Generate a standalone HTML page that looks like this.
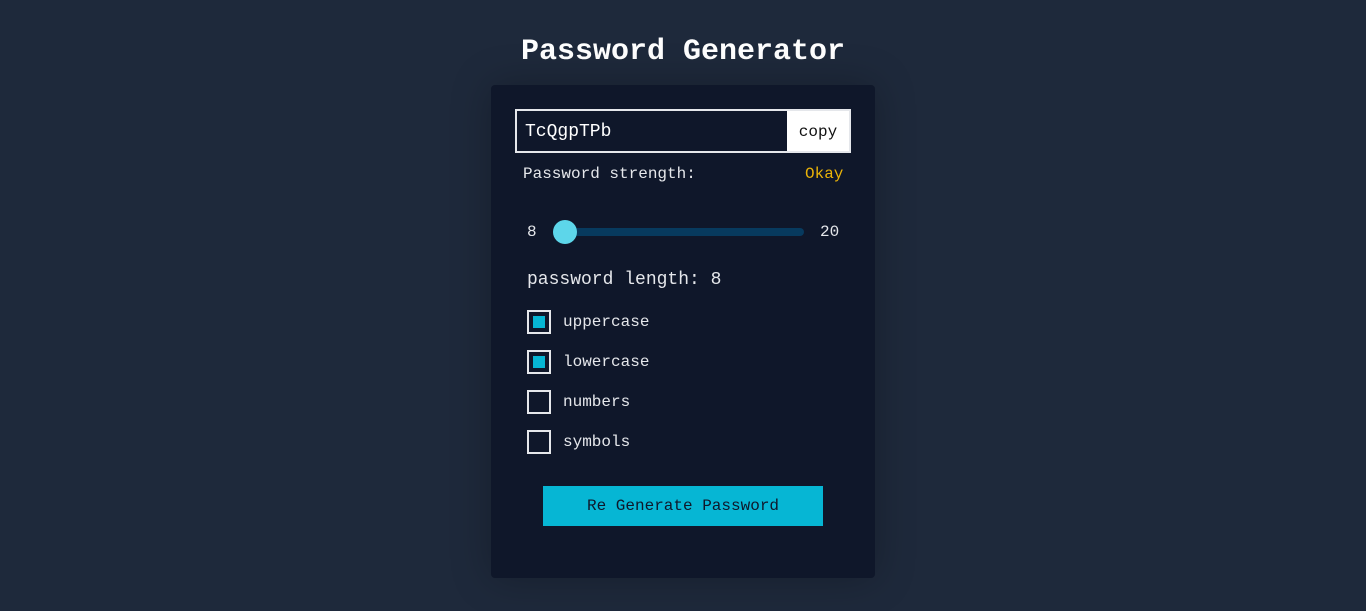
<!DOCTYPE html>
<html><head><style>
body{margin:0;width:1366px;height:611px;background:#1e293b;font-family:"Liberation Mono",monospace;color:#e5e7eb;position:relative;overflow:hidden}
.t{position:absolute;left:0;width:1366px;top:32px;text-align:center;font-size:30px;font-weight:bold;color:#fff;line-height:40px}
.card{position:absolute;left:491px;top:85px;width:384px;height:493px;background:#0f172a;border-radius:4px;box-shadow:0 0 40px rgba(0,0,0,.25)}
.a{position:absolute}
.inp{left:24px;top:24px;width:332px;height:40px;border:2px solid #e5e7eb;background:#0f172a}
.pw{left:8px;top:0;line-height:42px;font-size:18px;color:#fff}
.cp{right:0;top:0;width:62px;height:40px;background:#fff;color:#111;font-size:16px;line-height:42px;text-align:center}
.s{font-size:16px;line-height:20px}
.cb{width:20px;height:20px;border:2px solid #e5e7eb}
.cb i{position:absolute;left:4px;top:4px;width:12px;height:12px;background:#06b6d4}
</style></head><body>
<div class="t">Password Generator</div>
<div class="card">
<div class="a inp"><div class="a pw">TcQgpTPb</div><div class="a cp">copy</div></div>
<div class="a s" style="left:32px;top:79px">Password strength:</div>
<div class="a s" style="left:314px;top:79px;color:#eab308">Okay</div>
<div class="a s" style="left:36px;top:137px">8</div>
<div class="a" style="left:62px;top:143px;width:251px;height:8px;border-radius:4px;background:#073a5e"></div>
<div class="a" style="left:62px;top:135px;width:24px;height:24px;border-radius:50%;background:#5dd6ea"></div>
<div class="a s" style="left:329px;top:137px">20</div>
<div class="a" style="left:36px;top:184px;font-size:18px;line-height:22px">password length: 8</div>
<div class="a cb" style="left:36px;top:225px"><i></i></div><div class="a s" style="left:72px;top:227px">uppercase</div>
<div class="a cb" style="left:36px;top:265px"><i></i></div><div class="a s" style="left:72px;top:267px">lowercase</div>
<div class="a cb" style="left:36px;top:305px"></div><div class="a s" style="left:72px;top:307px">numbers</div>
<div class="a cb" style="left:36px;top:345px"></div><div class="a s" style="left:72px;top:347px">symbols</div>
<div class="a s" style="left:52px;top:401px;width:280px;height:40px;line-height:40px;background:#06b6d4;color:#0f172a;text-align:center">Re Generate Password</div>
</div>
</body></html>
